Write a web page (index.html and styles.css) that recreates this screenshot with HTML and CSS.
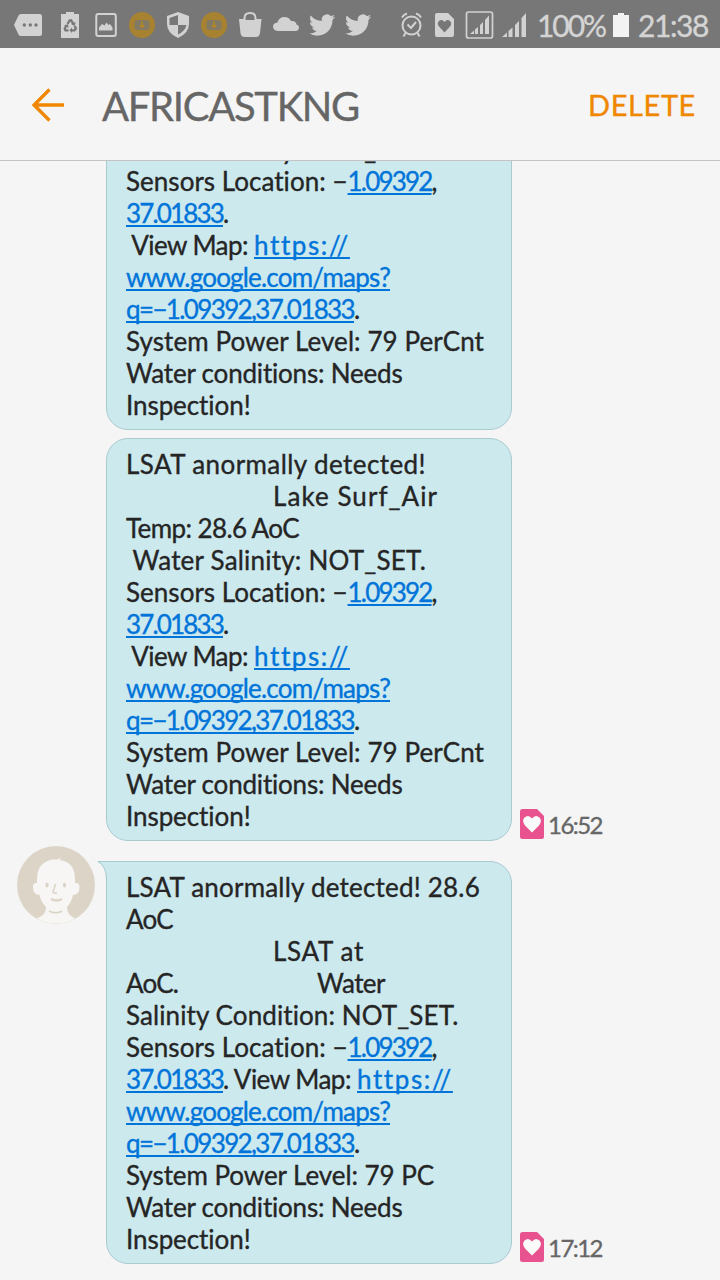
FILE: index.html
```html
<!DOCTYPE html>
<html lang="en">
<head>
<meta charset="utf-8">
<title>AFRICASTKNG</title>
<link rel="stylesheet" href="styles.css">
</head>
<body>
<div class="screen">
  <div class="status">
    <svg class="status-icons" width="532" height="48" viewBox="0 0 532 48" fill="#d2d2d2">
      <path d="M21 14h18.500q2.500 0 2.500 2.500v17q0 2.500-2.500 2.500H21q-1.500 0-2.500-1.500L14 25l4.500-9.500Q19.500 14 21 14z"/>
      <g fill="#777"><circle cx="24.300" cy="25" r="1.700"/><circle cx="30.300" cy="25" r="1.700"/><circle cx="36" cy="25" r="1.700"/></g>
      <path d="M61 14h5v-2h8v2h5v24H61z"/>
      <g fill="none" stroke="#777" stroke-width="2.300"><path d="M67.500 24l2.200-3.500h1.500l2 3.300M74.600 26l1.300 2.400-1.400 2h-3.500M68.500 30.400h-3l-.8-1.900 1.700-3"/></g>
      <path fill="#777" d="M75.500 22l-.8 4-3.700-2zM72 27.500v5.600l-2.600-2.800zM64 25.200l4-.9.600 3.600z"/>
      <rect x="96.300" y="14" width="19.500" height="22" rx="2" fill="none" stroke="#d2d2d2" stroke-width="2"/>
      <path d="M99 30.500v-3l3-3.500 2.500 1.500 2-3 2 2.500 1.500-1 2.500 3.500v3z"/>
      <g id="badge"><circle cx="142" cy="25" r="13" fill="#a78230"/><rect x="134.500" y="20" width="15" height="10" rx="3" fill="#777" opacity=".75"/><path d="M142 21v6m-2.200-1.800l2.200 2.200 2.200-2.200" fill="none" stroke="#b8891f" stroke-width="1.300"/></g>
      <path d="M178 12l11 4v8q0 9-11 14-11-5-11-14v-8z"/>
      <path fill="#777" d="M178 15v10h-8.500v-7zM178 25h8.400q-1 6-8.400 9.500z"/>
      <use href="#badge" x="72"/>
      <path d="M239 19h22.500l-1.500 14q-.5 4-4 4h-11.500q-3.500 0-4-4z"/>
      <path d="M244.500 21v-3q0-5 5.500-5t5.500 5v3" fill="none" stroke="#d2d2d2" stroke-width="2"/>
      <path d="M245.500 19.500h9" stroke="#777" stroke-width="1"/>
      <path d="M278 31q-5-.5-5-4.500 0-3.500 4.500-4 1.500-5.500 7-5.500 4.500 0 6.500 4 5-.5 5.500 3.500 2.500.500 2.500 3t-3 3.500z"/>
      <path id="bird" transform="translate(309 12) scale(1.090)" d="M23.950 4.570a10 10 0 0 1-2.820.77 4.960 4.960 0 0 0 2.160-2.720c-.95.55-2 .95-3.130 1.180a4.920 4.920 0 0 0-8.380 4.480C7.690 8.090 4.070 6.130 1.640 3.160a4.820 4.820 0 0 0-.67 2.480c0 1.710.87 3.210 2.190 4.100a4.900 4.900 0 0 1-2.230-.62v.06a4.920 4.920 0 0 0 3.950 4.830 5 5 0 0 1-2.210.08 4.940 4.940 0 0 0 4.600 3.420A9.870 9.870 0 0 1 0 19.540a14 14 0 0 0 7.550 2.210c9.050 0 14-7.500 14-13.980 0-.21 0-.42-.02-.63a9.940 9.940 0 0 0 2.460-2.550z"/>
      <use href="#bird" x="36"/>
      <g fill="none" stroke="#d2d2d2" stroke-width="2"><circle cx="411.500" cy="25.500" r="9"/><path d="M407.500 24.500l3.500 3.500 5-6M402 17.500q1.500-3 5-4M421 17.500q-1.500-3-5-4M405.500 33l-2 3.500M417.500 33l2 3.500"/></g>
      <path d="M437 13h11l6 6v15.500q0 2.500-2 2.500h-15q-2 0-2-2.500V15q0-2 2-2z"/>
      <path fill="#777" d="M444.500 32.500l-5.500-6q-2.500-3 0-5.500 3-2.200 5.500 1 2.500-3.200 5.500-1 2.500 2.500 0 5.500z"/>
      <rect x="466.500" y="12" width="26" height="26" rx="2" fill="none" stroke="#d2d2d2" stroke-width="1.700"/>
      <path d="M470 34l4-3.500V34zM475 29.500l3-2.500v7h-3zM480 25l3-3v12h-3zM485 20l4-4.500V34h-4z"/>
      <path d="M502 37l5-4.500V37zM508.500 31l4-3.500V37h-4zM515 25l4-4v16h-4zM521.500 18l4.500-5v24h-4.500z"/>
    </svg>
    <span class="battery-text" data-fit="68">100%</span>
    <svg class="battery" width="16" height="24" viewBox="0 0 16 24"><path fill="#f2f2f2" d="M0 2h5V0h6v2h5v22H0z"/></svg>
    <span class="clock" data-fit="70">21:38</span>
  </div>

  <header class="bar">
    <svg class="back" width="34" height="34" viewBox="0 0 34 34" fill="none" stroke="#ef8700" stroke-width="3.300"><path d="M33 17H3M18.500 1.500L3 17l15.500 15.500"/></svg>
    <h1 class="title" data-fit="257">AFRICASTKNG</h1>
    <span class="delete" data-fit="108">DELETE</span>
  </header>

  <main class="thread">
    <div class="message">
      <div class="bubble">
        <div class="line"><span data-fit="300"> Water Salinity: NOT_SET.</span></div>
        <div class="line"><span data-fit="222">Sensors Location: −</span><a data-fit="84">1.09392</a>,</div>
        <div class="line"><a data-fit="97">37.01833</a>.</div>
        <div class="line"><span data-fit="128"> View Map: </span><a data-fit="95">https://</a></div>
        <div class="line"><a data-fit="264">www.google.com/maps?</a></div>
        <div class="line"><a data-fit="228">q=−1.09392,37.01833</a>.</div>
        <div class="line"><span data-fit="358">System Power Level: 79 PerCnt</span></div>
        <div class="line"><span data-fit="277">Water conditions: Needs</span></div>
        <div class="line"><span data-fit="125">Inspection!</span></div>
      </div>
    </div>

    <div class="message">
      <div class="bubble">
        <div class="line"><span data-fit="300">LSAT anormally detected!</span></div>
        <div class="line indent"><span data-fit="165">Lake Surf_Air</span></div>
        <div class="line"><span data-fit="173">Temp: 28.6 AoC</span></div>
        <div class="line"><span data-fit="300"> Water Salinity: NOT_SET.</span></div>
        <div class="line"><span data-fit="222">Sensors Location: −</span><a data-fit="84">1.09392</a>,</div>
        <div class="line"><a data-fit="97">37.01833</a>.</div>
        <div class="line"><span data-fit="128"> View Map: </span><a data-fit="95">https://</a></div>
        <div class="line"><a data-fit="264">www.google.com/maps?</a></div>
        <div class="line"><a data-fit="228">q=−1.09392,37.01833</a>.</div>
        <div class="line"><span data-fit="358">System Power Level: 79 PerCnt</span></div>
        <div class="line"><span data-fit="277">Water conditions: Needs</span></div>
        <div class="line"><span data-fit="125">Inspection!</span></div>
      </div>
      <div class="meta">
        <svg width="24" height="30" viewBox="0 0 24 30"><path fill="#e8538f" d="M2.500 0H17l7 7v20.500q0 2.500-2.500 2.500h-19Q0 30 0 27.500v-25Q0 0 2.500 0z"/><path fill="#fafafa" d="M12 23.500L5 16.500Q1.500 12 4.500 8.500q4-3.500 7.500 1 3.500-4.500 7.500-1 3 3.500-.5 8z"/></svg>
        <span class="time" data-fit="54">16:52</span>
      </div>
    </div>

    <div class="message last">
      <svg class="avatar" width="80" height="80" viewBox="0 0 80 80">
        <circle cx="40" cy="40" r="39" fill="#dcd4c7"/>
        <path fill="#f7f6f4" d="M42 14.500l3-2.500-1.500 3Q59 17 59 34v4q5-.5 4.500 5-.5 7-6.500 7-1.500 7-6 12 0 8 8 11.500Q50 79 40 78.500q-10 .5-19-5 9-3.500 9-11.500-5-5-6.500-12-6 0-6.500-7-.5-5.500 4-5v-4q0-17 16-19.500z"/>
        <g fill="#dcd4c7"><ellipse cx="31" cy="40" rx="1.600" ry="2.500"/><ellipse cx="48.500" cy="40" rx="1.600" ry="2.500"/></g>
        <g fill="none" stroke="#dcd4c7" stroke-width="1.600"><path d="M39.500 39l-2.500 8q.5 1.500 4 1"/><path d="M35 54q5.500 3 11 0" stroke-width="2.500"/><path d="M33 66q7 3.500 13 0"/></g>
      </svg>
      <div class="bubble tailed">
        <svg class="tail" width="12" height="22" viewBox="0 0 12 22"><path fill="#cce9ee" d="M0 0h12v22H10V19Q10 5 0 .5z"/><path fill="none" stroke="#a8cbd0" d="M12 .5H1Q9.500 5 9.500 19v3"/></svg>
        <div class="line"><span data-fit="354">LSAT anormally detected! 28.6</span></div>
        <div class="line"><span data-fit="47">AoC</span></div>
        <div class="line indent"><span data-fit="91">LSAT at</span></div>
        <div class="line"><span class="value" data-fit="52">AoC.</span><span class="after" data-fit="68">Water</span></div>
        <div class="line"><span data-fit="333">Salinity Condition: NOT_SET.</span></div>
        <div class="line"><span data-fit="222">Sensors Location: −</span><a data-fit="84">1.09392</a>,</div>
        <div class="line"><a data-fit="97">37.01833</a><span data-fit="134">. View Map: </span><a data-fit="95">https://</a></div>
        <div class="line"><a data-fit="264">www.google.com/maps?</a></div>
        <div class="line"><a data-fit="228">q=−1.09392,37.01833</a>.</div>
        <div class="line"><span data-fit="308">System Power Level: 79 PC</span></div>
        <div class="line"><span data-fit="277">Water conditions: Needs</span></div>
        <div class="line"><span data-fit="125">Inspection!</span></div>
      </div>
      <div class="meta">
        <svg width="24" height="30" viewBox="0 0 24 30"><path fill="#e8538f" d="M2.500 0H17l7 7v20.500q0 2.500-2.500 2.500h-19Q0 30 0 27.500v-25Q0 0 2.500 0z"/><path fill="#fafafa" d="M12 23.500L5 16.500Q1.500 12 4.500 8.500q4-3.500 7.500 1 3.500-4.500 7.500-1 3 3.500-.5 8z"/></svg>
        <span class="time" data-fit="54">17:12</span>
      </div>
    </div>
  </main>
</div>
<script src="fit.js"></script>
</body>
</html>
```

FILE: styles.css
```css
* { box-sizing: border-box; }
body { margin: 0; }
svg { display: block; flex: none; }

.screen {
  width: 720px;
  height: 1280px;
  display: flex;
  flex-direction: column;
  overflow: hidden;
  background: #f5f5f5;
  font-family: Lato, "Open Sans", sans-serif;
  color: #252525;
  -webkit-text-stroke: 0.35px currentColor;
}

.status {
  height: 48px;
  flex: none;
  display: flex;
  align-items: center;
  padding-top: 2px;
  background: #777;
  color: #d4d4d4;
  font-size: 30px;
  line-height: 46px;
  white-space: pre;
}
.status-icons { margin-top: -2px; }
.battery-text { margin-left: 5px; width: 68px; }
.battery { margin: -1px 0 0 8px; }
.clock { margin-left: 9px; }

.bar {
  height: 113px;
  flex: none;
  display: flex;
  align-items: center;
  padding: 1px 24px 0 31px;
  border-bottom: 1px solid #c4c4c4;
  white-space: pre;
}
.title {
  margin: 3px 0 0 37px;
  font-size: 40px;
  font-weight: 400;
  color: #666;
}
.delete {
  margin-left: auto;
  font-size: 29px;
  color: #ef8700;
}

.thread {
  flex: 1;
  min-height: 0;
  display: flex;
  flex-direction: column;
  justify-content: flex-end;
  gap: 8px;
  padding-bottom: 16px;
  overflow: hidden;
}
.message {
  flex: none;
  display: flex;
  align-items: flex-end;
  padding-left: 106px;
}
.message.last { margin-top: 12px; padding-left: 16px; }
.avatar { align-self: flex-start; margin: -16px 10px 0 0; }

.bubble {
  position: relative;
  width: 406px;
  flex: none;
  padding: 9px 19px 8px;
  border: 1px solid #a8cbd0;
  border-radius: 22px;
  background: #cce9ee;
}
.bubble.tailed { border-top-left-radius: 0; }
.tail { position: absolute; left: -10px; top: -1px; }

.line {
  height: 32px;
  font-size: 26px;
  line-height: 32px;
  white-space: pre;
}
.indent { padding-left: 147px; }
.value { display: inline-block; width: 52px; }
.after { margin-left: 139px; }
.line a {
  color: #0074d9;
  text-decoration: underline;
  text-decoration-thickness: 2px;
  text-underline-offset: 2px;
  text-decoration-skip-ink: none;
}

.meta {
  display: flex;
  align-items: center;
  gap: 4px;
  padding: 0 0 1px 8px;
  color: #666;
}
.meta svg { margin-top: -1px; }
.time { padding-top: 1px; font-size: 24px; line-height: 30px; white-space: pre; }
```

FILE: fit.js
```js
// Track each text run so that it fills its measured width.
document.querySelectorAll('[data-fit]').forEach(function (el) {
  var range = document.createRange();
  range.selectNodeContents(el);
  var natural = range.getBoundingClientRect().width;
  var spacing = (Number(el.dataset.fit) - natural) / el.textContent.length;
  el.style.letterSpacing = spacing.toFixed(3) + 'px';
});
```
